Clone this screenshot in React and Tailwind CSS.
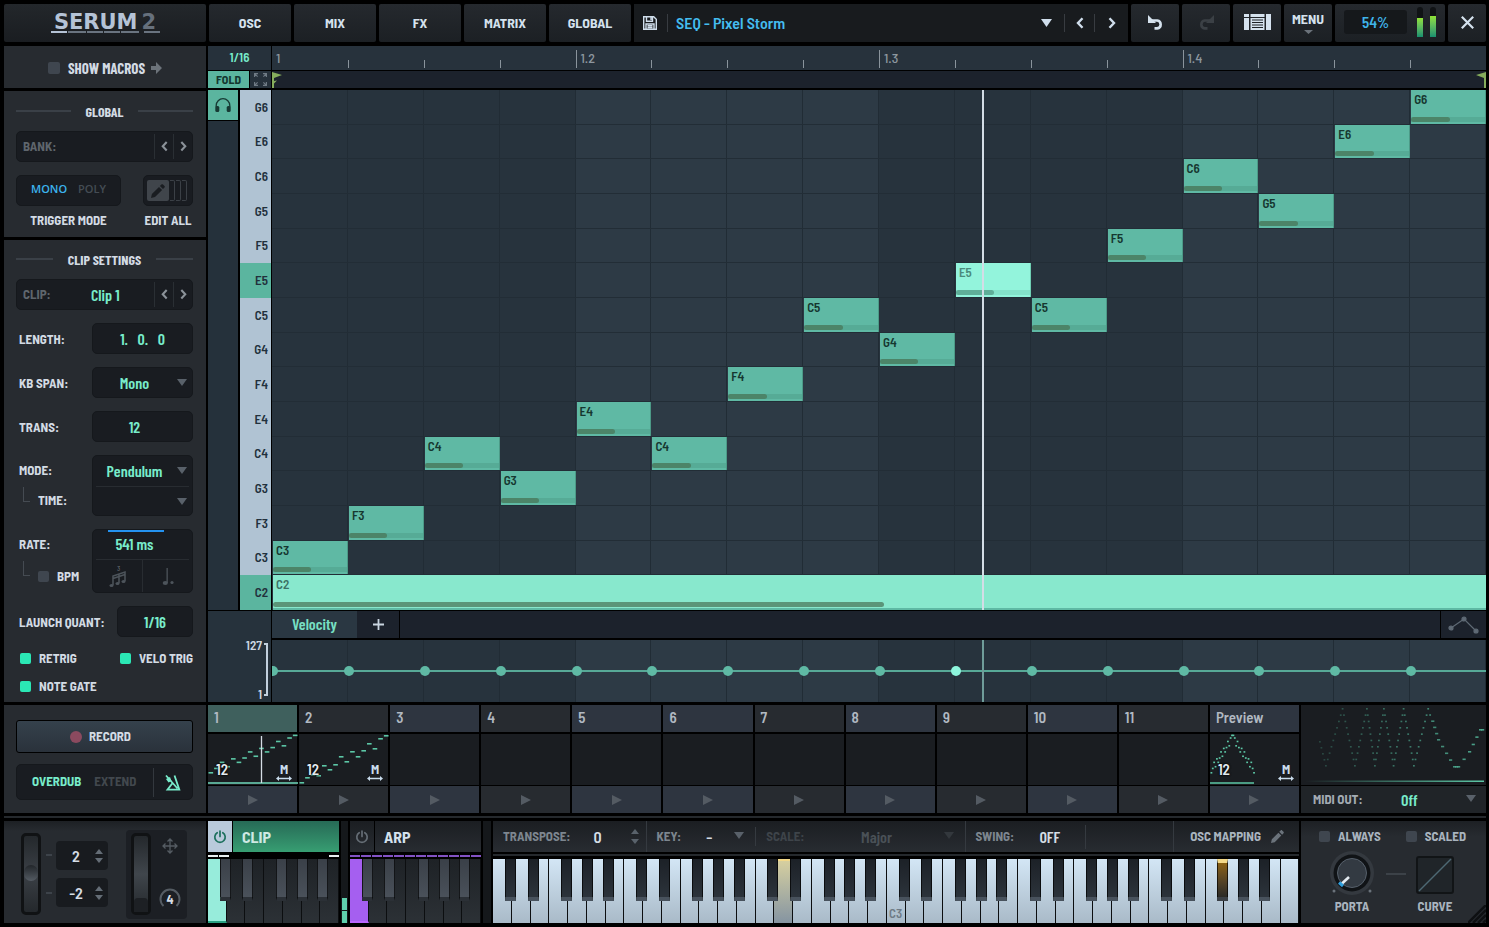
import React from "react";

const PANEL = "bg-[#272b30]";
const FIELD = "rounded-[5px] border border-[#15181c] bg-[#191c21]";
const LABEL = "text-[13px] leading-4 font-bold text-[#d3dbe4]";
const VALUE = "font-['Barlow_Condensed','Barlow_Semi_Condensed','Liberation_Sans_Narrow',Roboto,sans-serif] text-[16px] font-semibold";

const ROWS = ["G6", "E6", "C6", "G5", "F5", "E5", "C5", "G4", "F4", "E4", "C4", "G3", "F3", "C3", "C2"];
const NOTES = ["C3", "F3", "C4", "G3", "E4", "C4", "F4", "C5", "G4", "E5", "C5", "F5", "C6", "G5", "E6", "G6"];
const ACTIVE = 9;
const STEPS = Array.from({ length: 16 }, (_, i) => i);
const SEMI = { C: 0, D: 2, E: 4, F: 5, G: 7, A: 9, B: 11 };
const pitchY = (n) => 39 - (SEMI[n[0]] + (Number(n[1]) - 3) * 12) * 0.87;
const CLIP_ONE = NOTES.map(pitchY);
const CLIP_TWO = [49, 44, 41, 42, 32, 36, 31, 23, 28, 18, 23, 17, 10, 15, 5, 2];

function Caret({ className = "", up = false, w = 10, h = 7 }) {
  return (
    <svg className={className} width={w} height={h} viewBox="0 0 10 7" preserveAspectRatio="none" aria-hidden="true">
      <path d={up ? "M0 7h10L5 0z" : "M0 0h10L5 7z"} fill="currentColor" />
    </svg>
  );
}

function Chevron({ left = false, w = 8 }) {
  return (
    <svg width={w} height={w * 1.5} viewBox="0 0 8 12" fill="none" stroke="currentColor" strokeWidth="2.4" aria-hidden="true">
      <path d={left ? "M6.5 1.2 2 6l4.500 4.800" : "M1.500 1.200 6 6l-4.500 4.800"} />
    </svg>
  );
}

function Power({ className }) {
  return (
    <svg className={className} width="14" height="14" viewBox="0 0 14 14" fill="none" stroke="currentColor" strokeWidth="1.700" strokeLinecap="round" aria-hidden="true">
      <path d="M7 1v5.500M4.200 2.700a5.200 5.200 0 1 0 5.600 0" />
    </svg>
  );
}

function Pencil({ size = 14 }) {
  return (
    <svg width={size} height={size} viewBox="0 0 14 14" fill="currentColor" aria-hidden="true">
      <path d="M0 14l.9-4L8 2.900l3.100 3.100L4 13.100zM8.900 2l1.500-1.500c.5-.5 1.100-.5 1.600 0l1.500 1.500c.5.5.5 1.100 0 1.600L12 5.100z" />
    </svg>
  );
}

function Check({ id, label, on, labelClass = "text-[13px] text-[#d3dbe4]", box = "size-[11px]" }) {
  return (
    <label htmlFor={id} className={`flex items-center gap-2 leading-4 font-bold ${labelClass}`}>
      <input id={id} type="checkbox" defaultChecked={on} className={`${box} shrink-0 appearance-none rounded-[2px] bg-[#3f464f] checked:bg-[#2be8b5]`} />
      {label}
    </label>
  );
}

function SectionTitle({ children, line }) {
  return (
    <div className="flex h-5 items-center justify-between">
      <span className={`${line} h-[2px] bg-[#3a4047]`} />
      <h2 className="font-['Barlow_Condensed','Barlow_Semi_Condensed','Liberation_Sans_Narrow',Roboto,sans-serif] text-[14px] font-bold text-[#d3dbe4]">{children}</h2>
      <span className={`${line} h-[2px] bg-[#3a4047]`} />
    </div>
  );
}

function Stepper({ name, value, id, text = "" }) {
  return (
    <div className={`flex h-[31px] items-stretch ${FIELD}`}>
      <label htmlFor={id} className="self-center pl-[6px] text-[13px] font-bold text-[#5f666d]">{name}</label>
      <input id={id} defaultValue={value} className={`min-w-0 flex-1 bg-transparent pl-[6px] text-center outline-none ${VALUE} ${text}`} />
      <button aria-label={`Previous ${name}`} className="my-[2px] flex w-[19px] items-center justify-center border-l border-[#2a2f34] text-[#8b9299]"><Chevron left w={7} /></button>
      <button aria-label={`Next ${name}`} className="my-[2px] flex w-[19px] items-center justify-center border-l border-[#2a2f34] text-[#8b9299]"><Chevron w={7} /></button>
    </div>
  );
}

function Select({ id, value, className = "", caret = "text-[#59616a]", textClass = "text-[#78eccb]" }) {
  return (
    <div className={`relative flex ${className}`}>
      <select id={id} defaultValue={value} className={`h-full w-full appearance-none bg-transparent pr-4 text-center outline-none [text-align-last:center] ${VALUE} ${textClass}`}>
        <option>{value}</option>
      </select>
      <Caret className={`pointer-events-none absolute top-[11px] right-[5px] ${caret}`} />
    </div>
  );
}

function Header() {
  const tab = "flex h-[38px] items-center justify-center rounded-[2px] bg-linear-to-b from-[#25292e] to-[#1c2024] pb-[2px] text-[#d5e2ee]";
  return (
    <header className="flex shrink-0 gap-[3px] pt-1">
      <div className="flex h-[38px] w-[202px] flex-col items-center justify-center rounded-[2px] bg-linear-to-b from-[#23272b] to-[#1a1d21]">
        <h1 className="font-[DejaVu_Sans,sans-serif] text-[21px] leading-[18px] font-bold whitespace-nowrap text-[#b5c3d6]">
          SERUM<span className="pl-1 text-[#66707c]">2</span>
        </h1>
        <span className="flex gap-px">
          <i className="h-[2px] w-4 bg-[#b5c3d6]" />
          <i className="h-[2px] w-[18px] bg-[#6a7480]" />
          <i className="h-[2px] w-[16px] bg-[#6a7480]" />
          <i className="h-[2px] w-[16px] bg-[#6a7480]" />
          <i className="h-[2px] w-[18px] bg-[#6a7480]" />
          <i className="ml-1 h-[2px] w-4 bg-[#6a7480]" />
        </span>
      </div>
      <nav className="flex gap-[3px]">
        {["OSC", "MIX", "FX", "MATRIX", "GLOBAL"].map((t) => (
          <button key={t} className={`${tab} w-[82px] text-[14px] font-bold`}>{t}</button>
        ))}
      </nav>
      <div className="flex h-[38px] min-w-0 flex-1 items-center bg-[#181b1e] pl-[9px] text-[#d0deec]">
        <button aria-label="Save preset">
          <svg width="14" height="14" viewBox="0 0 14 14" fill="none" stroke="currentColor" strokeWidth="1.400">
            <path d="M.7.700h10l2.600 2.600v10H.7zM3.500.700v4.500h6V.700M8 1.500v2.500M3 13.300V8h8v5.300M4.500 9.700h5M4.500 11.500h5" />
          </svg>
        </button>
        <span className="mr-[8px] ml-[10px] h-[18px] w-px bg-[#383c41]" />
        <button className="flex min-w-0 flex-1 items-center justify-between pr-[12px] text-left text-[16px] font-semibold whitespace-nowrap text-[#44bdf0]">
          SEQ - Pixel Storm
          <Caret className="text-[#d0deec]" w={11} h={8} />
        </button>
        <button aria-label="Previous preset" className="flex h-[18px] w-[30px] items-center justify-center border-l border-[#383c41]"><Chevron left w={8} /></button>
        <button aria-label="Next preset" className="flex h-[18px] w-[34px] items-center justify-center border-l border-[#383c41]"><Chevron w={8} /></button>
      </div>
      <button aria-label="Undo" className={`${tab} w-12`}>
        <svg width="17" height="16" viewBox="0 0 17 16" fill="none" stroke="currentColor" strokeWidth="2.600">
          <path d="M3 6.500h7.300a4 4 0 0 1 0 7.900H7.500" />
          <path d="M1 1v8h8z" fill="currentColor" stroke="none" />
        </svg>
      </button>
      <button aria-label="Redo" className={`${tab} w-12`}>
        <svg width="17" height="16" viewBox="0 0 17 16" fill="none" stroke="#3b4045" strokeWidth="2.600">
          <path d="M14 6.500H6.700a4 4 0 0 0 0 7.900H9.500" />
          <path d="M16 1v8H8z" fill="#3b4045" stroke="none" />
        </svg>
      </button>
      <button aria-label="Browser" className={`${tab} w-12`}>
        <svg width="27" height="16" viewBox="0 0 27 16" fill="currentColor">
          <path d="M0 0h5v3H0zM0 4h5v12H0zM22 0h5v16h-5zM6.500 0h14v3h-14zM6.500 4h14v12h-14z" />
          <path d="M8 6h11M8 8.500h11M8 11h11M8 13.500h11" stroke="#1d2125" strokeWidth="1" />
        </svg>
      </button>
      <button className={`${tab} w-12 flex-col gap-[3px] text-[14px] leading-[16px] font-bold`}>
        MENU
        <Caret className="text-[#6b727a]" w={9} h={4} />
      </button>
      <div className={`${tab} w-[110px] gap-[10px]`}>
        <output className="flex h-6 w-[63px] items-center justify-center rounded-[3px] bg-[#15181b] text-[15px] font-semibold text-[#3fb4ea]">54%</output>
        <div className="flex h-[30px] items-end gap-[7px]" aria-label="Output level">
          <span className="flex h-full w-[6px] items-end rounded-t-[3px] bg-[#101315]"><i className="h-[19px] w-full bg-linear-to-b from-[#8fe234] to-[#16906e]" /></span>
          <span className="flex h-full w-[6px] items-end rounded-t-[3px] bg-[#101315]"><i className="h-[21px] w-full bg-linear-to-b from-[#8fe234] to-[#16906e]" /></span>
        </div>
      </div>
      <button aria-label="Close" className={`${tab} w-[38px]`}>
        <svg width="13" height="13" viewBox="0 0 13 13" stroke="currentColor" strokeWidth="2.200"><path d="M.8.800l11.400 11.400M12.200.800.8 12.200" /></svg>
      </button>
    </header>
  );
}

function Sidebar() {
  const row = "flex items-center justify-between pl-[3px]";
  return (
    <aside className="flex w-[202px] shrink-0 flex-col gap-[3px]">
      <section className={`flex h-[42px] items-center justify-center gap-[6px] pt-[2px] ${PANEL}`}>
        <Check id="macros" label="SHOW MACROS" box="size-3" labelClass="font-['Barlow_Condensed','Barlow_Semi_Condensed','Liberation_Sans_Narrow',Roboto,sans-serif] text-[15px] text-[#d3dbe4]" />
        <svg width="11" height="12" viewBox="0 0 11 12" fill="#6c737a"><path d="M0 4h5V0l6 6-6 6V8H0z" /></svg>
      </section>

      <section className={`h-[146px] pt-[10px] pr-[13px] pl-3 ${PANEL}`}>
        <SectionTitle line="w-[55px]">GLOBAL</SectionTitle>
        <div className="mt-[10px]"><Stepper id="bank" name="BANK:" value="" /></div>
        <div className="mt-[13px] flex justify-between">
          <div className="flex flex-col items-center gap-[6px]">
            <div className={`flex h-[31px] w-[105px] items-center justify-center gap-[11px] pb-[2px] font-[Open_Sans,sans-serif] text-[11px] font-semibold ${FIELD}`}>
              <button className="text-[#3cb4ee]">MONO</button>
              <button className="text-[#444c54]">POLY</button>
            </div>
            <span className={LABEL}>TRIGGER MODE</span>
          </div>
          <div className="flex flex-col items-center gap-[6px]">
            <button aria-label="Edit all clips" className={`flex h-[31px] w-[50px] items-center gap-px pl-[3px] ${FIELD}`}>
              <span className="flex h-[21px] w-[22px] items-center justify-center rounded-[2px] bg-[#40454b] text-[#1a1d21]"><Pencil /></span>
              <i className="h-[21px] w-[5px] rounded-r-[2px] border border-l-0 border-[#3b4046]" />
              <i className="h-[21px] w-[5px] rounded-r-[2px] border border-l-0 border-[#3b4046]" />
              <i className="h-[21px] w-[5px] rounded-r-[2px] border border-l-0 border-[#3b4046]" />
            </button>
            <span className={LABEL}>EDIT ALL</span>
          </div>
        </div>
      </section>

      <section className={`flex flex-1 flex-col gap-[13px] pt-[9px] pr-[13px] pb-2 pl-3 ${PANEL}`}>
        <div className="flex flex-col gap-[10px]">
          <SectionTitle line="w-[37px]">CLIP SETTINGS</SectionTitle>
          <Stepper id="clip" name="CLIP:" value="Clip 1" text="text-[#78eccb]" />
        </div>
        <div className={row}>
          <label htmlFor="length" className={LABEL}>LENGTH:</label>
          <input id="length" defaultValue="1.   0.   0" className={`h-[31px] w-[101px] text-center text-[#78eccb] ${VALUE} ${FIELD}`} />
        </div>
        <div className={row}>
          <label htmlFor="kbspan" className={LABEL}>KB SPAN:</label>
          <Select id="kbspan" value="Mono" className={`h-[31px] w-[101px] ${FIELD}`} />
        </div>
        <div className={row}>
          <label htmlFor="trans" className={LABEL}>TRANS:</label>
          <input id="trans" defaultValue="12" className={`h-[31px] w-[101px] pr-4 text-center text-[#78eccb] ${VALUE} ${FIELD}`} />
        </div>
        <div className="flex justify-between pl-[3px]">
          <div className="flex flex-col gap-[14px] pt-[7px]">
            <label htmlFor="mode" className={LABEL}>MODE:</label>
            <div className="flex gap-2 pl-1">
              <i className="-mt-[5px] h-[15px] w-[7px] border-b border-l border-[#454b52]" />
              <label htmlFor="time" className={LABEL}>TIME:</label>
            </div>
          </div>
          <div className={`flex h-[61px] w-[101px] flex-col ${FIELD}`}>
            <Select id="mode" value="Pendulum" className="h-[30px]" />
            <div className="mx-[3px] h-px bg-[#282c31]" />
            <Select id="time" value="" className="h-[28px]" />
          </div>
        </div>
        <div className="flex justify-between pl-[3px]">
          <div className="flex flex-col gap-4 pt-[7px]">
            <label htmlFor="rate" className={LABEL}>RATE:</label>
            <div className="flex gap-2 pl-1">
              <i className="-mt-[7px] h-[15px] w-[7px] border-b border-l border-[#454b52]" />
              <Check id="bpm" label="BPM" />
            </div>
          </div>
          <div className={`flex h-16 w-[101px] flex-col ${FIELD}`}>
            <div className="mr-7 ml-[15px] h-[2px] shrink-0 bg-[#2492f0]" />
            <input id="rate" defaultValue="541 ms" className={`h-[24px] w-full bg-transparent pr-4 text-center text-[#78eccb] ${VALUE}`} />
            <div className="mx-[3px] mt-[3px] h-px bg-[#282c31]" />
            <div className="flex flex-1 items-center">
              <button aria-label="Triplet" className="flex h-full flex-1 items-center justify-center border-r border-[#282c31]">
                <svg width="18" height="23" viewBox="0 0 18 23" fill="none" stroke="#4d545b" strokeWidth="1.500">
                  <path d="M4 20v-9l12-4v9M10 18V9M4 13.500l12-4" />
                  <ellipse cx="2.500" cy="20.500" rx="2" ry="1.500" fill="#4d545b" stroke="none" />
                  <ellipse cx="8.500" cy="18.500" rx="2" ry="1.500" fill="#4d545b" stroke="none" />
                  <ellipse cx="14.500" cy="16.500" rx="2" ry="1.500" fill="#4d545b" stroke="none" />
                  <text x="8" y="5.500" fontSize="7" fill="#6a7178" stroke="none">3</text>
                </svg>
              </button>
              <button aria-label="Dotted" className="flex h-full flex-1 items-center justify-center">
                <svg width="12" height="19" viewBox="0 0 12 19" fill="#4d545b"><path d="M4.500 1h1.300v15H4.500z" /><ellipse cx="3.300" cy="16" rx="2.600" ry="2" /><circle cx="10" cy="15.500" r="1.600" /></svg>
              </button>
            </div>
          </div>
        </div>
        <div className={row}>
          <label htmlFor="quant" className={LABEL}>LAUNCH QUANT:</label>
          <input id="quant" defaultValue="1/16" className={`h-[31px] w-[76px] text-center text-[#78eccb] ${VALUE} ${FIELD}`} />
        </div>
        <div className="flex flex-col gap-3 pl-1">
          <div className="flex justify-between"><Check id="retrig" label="RETRIG" on /><Check id="velotrig" label="VELO TRIG" on /></div>
          <Check id="notegate" label="NOTE GATE" on />
        </div>
      </section>
    </aside>
  );
}

function Roll() {
  return (
    <section className="flex min-w-0 flex-1 flex-col">
      <div className="flex h-[25px] border-b border-black">
        <div className="flex w-16 items-center justify-center border-r border-black bg-[#26313b] text-[13px] font-semibold text-[#78eccb]">1/16</div>
        <div className="grid flex-1 grid-cols-16 bg-[#27323c] text-[14px] leading-6 font-medium text-[#8d979f]">
          {STEPS.map((i) => (
            <div key={i} className="flex items-end">
              {i > 0 && <i className={`mb-[2px] w-px bg-[#8a949c] ${i % 4 ? "h-2" : "h-[18px]"}`} />}
              {i % 4 === 0 && <span className="pl-1">{i ? `1.${i / 4 + 1}` : "1"}</span>}
            </div>
          ))}
        </div>
      </div>
      <div className="flex h-[19px] border-b-2 border-black">
        <div className="flex w-16 border-r border-black bg-[#26313b]">
          <button className="flex w-[42px] items-center justify-center border-r border-black bg-[#5bb59f] pb-px text-[12px] leading-none font-bold text-[#14362f]">FOLD</button>
          <button aria-label="Fit view" className="flex flex-1 items-center justify-center">
            <svg width="13" height="13" viewBox="0 0 13 13" fill="none" stroke="#6f7a84" strokeWidth="1.200"><path d="M.6 4V.600H4M.6.600l3 3M9 .600h3.400V4M12.400.600l-3 3M.6 9v3.400H4M.6 12.400l3-3M12.400 9v3.400H9M12.400 12.400l-3-3" /></svg>
          </button>
        </div>
        <div className="flex flex-1 justify-between bg-[#1c222c]">
          <svg width="10" height="17" viewBox="0 0 10 17" fill="#86ad5c"><path d="M0 1l10 3-8 3v3l3-.5L2 12.500V17H0z" /></svg>
          <svg width="10" height="17" viewBox="0 0 10 17" fill="#86ad5c"><path d="M10 1 0 4l8 3v10h2z" /></svg>
        </div>
      </div>

      <div className="flex min-h-[480px] flex-1 border-b border-black">
        <div className="w-8 border-r-2 border-black bg-[#25313b]">
          <button aria-label="Audition notes" className="flex h-[31px] w-[30px] items-center justify-center border-b border-black bg-[#5bb59f]">
            <svg width="16" height="14" viewBox="0 0 16 14" fill="#173a34"><path d="M1.200 9V7.500a6.800 6.800 0 0 1 13.600 0V9" fill="none" stroke="#173a34" strokeWidth="1.300" /><rect x=".3" y="8" width="4" height="6" rx="1.500" /><rect x="11.700" y="8" width="4" height="6" rx="1.500" /></svg>
          </button>
        </div>
        <div className="grid w-8 grid-rows-15 border-r border-black bg-[#b0c3d3] text-[13px] font-semibold text-[#22303c]">
          {ROWS.map((r) => (
            <div key={r} className={`flex items-center justify-end pr-[3px] ${r === "E5" || r === "C2" ? "bg-[#5bb59f]" : ""}`}>{r}</div>
          ))}
        </div>
        <div className="relative grid flex-1 grid-cols-16 grid-rows-15 overflow-hidden bg-[#27333d]">
          {STEPS.map((i) => (
            <i key={`c${i}`} style={{ gridColumn: i + 1, gridRow: "1 / -1" }} className={`border-r border-[#212c35] ${Math.floor(i / 4) % 2 ? "bg-[#2d3a45]" : "bg-[#27333d]"}`} />
          ))}
          {ROWS.map((r, i) => (
            <i key={r} style={{ gridRow: i + 1, gridColumn: "1 / -1" }} className="border-b border-[#222d36]" />
          ))}
          {NOTES.map((n, i) => (
            <div key={i} style={{ gridColumn: i + 1, gridRow: ROWS.indexOf(n) + 1 }} className={`mb-px ml-px flex flex-col justify-between border-r ${i === ACTIVE ? "border-[#6fd0b4] bg-[#93f4dc] text-[#4b8b7c]" : "border-[#4c9a87] bg-[#5fb9a4] text-[#163730]"}`}>
              <span className="pl-[3px] text-[13px] leading-[19px] font-semibold">{n}</span>
              <span className={`mb-[2px] h-[5px] ${i === ACTIVE ? "bg-[#84e2ca]" : "bg-[#56ab96]"}`}><i className={`block h-full w-[52%] rounded-full ${i === ACTIVE ? "bg-[#5fae98]" : "bg-[#4c8468]"}`} /></span>
            </div>
          ))}
          <div style={{ gridColumn: "1 / -1", gridRow: 15 }} className="ml-px flex flex-col justify-between bg-[#88e8cd] text-[#3d7265]">
            <span className="pl-[3px] text-[13px] leading-[19px] font-semibold">C2</span>
            <span className="h-[8px] border-b-2 border-[#5fb9a4]"><i className="block h-[5px] w-[50.400%] rounded-full bg-[#5b9579]" /></span>
          </div>
          <i className="absolute inset-y-0 left-[58.500%] w-[2px] bg-[#d3dde6]" />
        </div>
      </div>

      <div className="flex h-[91px]">
        <div className="flex w-16 justify-end gap-[2px] border-r border-black bg-[#26323c] pt-[26px] pr-[3px] text-[13px] leading-4 font-semibold text-[#cdd8e3]">
          <div className="flex flex-col justify-between text-right"><span>127</span><span>1</span></div>
          <i className="my-[6px] w-1 border-y-2 border-r-2 border-[#c2d0de]" />
        </div>
        <div className="flex min-w-0 flex-1 flex-col">
          <div className="flex h-[29px] border-b-2 border-black bg-[#1c222c]">
            <button className={`w-[85px] bg-[#2a3742] pb-px text-[#78e0c4] ${VALUE}`}>Velocity</button>
            <button aria-label="Add lane" className="flex w-[43px] items-center justify-center border-r border-black">
              <svg width="11" height="11" viewBox="0 0 11 11" stroke="#c9d5e0" strokeWidth="1.800"><path d="M0 5.500h11M5.500 0v11" /></svg>
            </button>
            <button aria-label="Line tool" className="ml-auto flex w-[46px] items-center justify-center border-l border-black">
              <svg width="31" height="18" viewBox="0 0 31 18" fill="#5f6a75" stroke="#5f6a75" strokeWidth="1.200"><path d="M3 12 16 3l12 12" fill="none" /><circle cx="3" cy="12" r="2" /><circle cx="16" cy="3" r="2" /><circle cx="28" cy="15" r="2" /></svg>
            </button>
          </div>
          <div className="relative grid flex-1 grid-cols-16 overflow-hidden">
            {STEPS.map((i) => (
              <div key={i} className={`border-r border-[#212c35] ${Math.floor(i / 4) % 2 ? "bg-[#2d3a45]" : "bg-[#27333d]"}`} />
            ))}
            <i className="absolute inset-x-0 top-[30px] h-[2px] bg-[#57a997]" />
            <i className="absolute inset-y-0 left-[58.500%] w-[2px] bg-[#6f9c99]" />
            <div className="absolute inset-0 grid grid-cols-16 items-center">
              {STEPS.map((i) => (
                <i key={i} className={`-ml-1 size-[10px] rounded-full ${i === ACTIVE ? "bg-[#8df5dc]" : "bg-[#5fb9a4]"}`} />
              ))}
            </div>
          </div>
        </div>
      </div>
    </section>
  );
}

function Dashes({ ys, width }) {
  const step = width / ys.length;
  return ys.map((y, i) => <rect key={i} x={i * step + 0.5} y={y - 1} width={Math.max(step - 1, 1.8)} height="1.600" fill="#5cc7a6" />);
}

function Clips() {
  const names = ["1", "2", "3", "4", "5", "6", "7", "8", "9", "10", "11", "Preview"];
  const dark = [1, 3, 6, 8, 10];
  return (
    <div className="grid min-w-0 flex-1 grid-cols-12 gap-x-[2px]">
      {names.map((n, i) => {
        const tone = dark.includes(i) ? "bg-[#272b30]" : "bg-[#2e3540]";
        const used = i < 2 || i === 11;
        return (
          <article key={n} className="flex flex-col">
            <h3 className={`h-[27px] pl-[6px] text-[15px] leading-[25px] font-semibold text-[#b1b9c2] ${i === 0 ? "bg-[#3f605d]" : tone}`}>{n}</h3>
            <div className="relative my-px h-[52px] border-t border-black bg-[#1a1d21]">
              {used && (
                <>
                  <svg className="absolute inset-0" width="90" height="51" viewBox="0 0 90 51">
                    {i === 0 && <><Dashes ys={CLIP_ONE} width={90} /><path d="M0 49h90" stroke="#6fd9bb" strokeWidth="1.300" /><path d="M53.500 2v47" stroke="#d5dde5" strokeWidth="1.300" /></>}
                    {i === 1 && <Dashes ys={CLIP_TWO} width={90} />}
                    {i === 11 && <><Dashes ys={[...CLIP_ONE, ...CLIP_ONE.slice().reverse()]} width={44} /><path d="M0 49h44" stroke="#5cc7a6" strokeWidth="1.300" /></>}
                  </svg>
                  <span className="absolute bottom-[8px] left-[8px] text-[15px] leading-4 font-semibold text-[#e4ebf1] [text-shadow:0_0_2px_#000,0_0_2px_#000]">12</span>
                  <span className="absolute right-[5px] bottom-[4px] flex flex-col items-center text-[13px] leading-[14px] font-bold text-[#c9dcec]">
                    M
                    <svg width="16" height="5" viewBox="0 0 16 5" fill="currentColor"><path d="M0 2.500 3 0v1.800h10V0l3 2.500L13 5V3.200H3V5z" /></svg>
                  </span>
                </>
              )}
            </div>
            <button aria-label={`Play ${n}`} className={`flex h-[27px] items-center justify-center ${tone}`}>
              <svg width="10" height="10" viewBox="0 0 10 10" fill="#545b63"><path d="M0 0l10 5-10 5z" /></svg>
            </button>
          </article>
        );
      })}
    </div>
  );
}

const TRACE = [[18, 36], [24, 60], [40.7, 3], [53, 60], [65, 3], [73, 60], [82, 3], [91.7, 60], [101.7, 3], [112, 60], [126.3, 3], [136, 34], [152, 61], [156, 61], [167, 46], [178, 24], [182, 24]];

function MidiOut() {
  const dots = [];
  TRACE.slice(0, -1).forEach(([x0, y0], s) => {
    const [x1, y1] = TRACE[s + 1];
    const n = Math.max(2, Math.round(Math.abs(y1 - y0) / 6.5));
    for (let k = 0; k < n; k++) dots.push([x0 + ((x1 - x0) * k) / n, y0 + ((y1 - y0) * k) / n]);
  });
  return (
    <section className="flex w-[185px] shrink-0 flex-col bg-[#1a1d21]">
      <svg className="w-full" height="80" viewBox="0 0 185 80" preserveAspectRatio="none">
        <defs><linearGradient id="fade"><stop offset="0" stopColor="#5cc7a6" stopOpacity="0" /><stop offset="1" stopColor="#5cc7a6" /></linearGradient></defs>
        {dots.map(([x, y], i) => <rect key={i} x={x} y={y} width={x > 130 ? 3.2 : 1.8} height="1.600" fill="#4fae93" opacity={0.2 + (x / 185) * 0.75} />)}
        <rect x="4" y="75.500" width="179" height="1.500" fill="url(#fade)" />
      </svg>
      <div className="flex h-7 items-center border-t border-black bg-[#202428] pl-3">
        <label htmlFor="midiout" className="text-[13px] font-bold whitespace-nowrap text-[#a3abb3]">MIDI OUT:</label>
        <Select id="midiout" value="Off" className="h-full flex-1 [&>select]:pr-[30px] [&>svg]:top-[9px] [&>svg]:right-[10px]" />
      </div>
    </section>
  );
}

function Record() {
  return (
    <section className={`flex w-[202px] shrink-0 flex-col gap-[11px] pt-[15px] pr-[13px] pl-3 ${PANEL}`}>
      <button className="flex h-[33px] items-center justify-center gap-[7px] rounded-[3px] border border-black bg-linear-to-b from-[#35414c] to-[#2a323b] pr-2 text-[13px] font-bold text-[#d3dbe4]">
        <i className="size-3 rounded-full bg-[#8b4a5f]" />RECORD
      </button>
      <div className={`flex h-9 items-center text-[13px] font-bold ${FIELD}`}>
        <button className="pl-[15px] text-[#78eccb]">OVERDUB</button>
        <button className="pl-[13px] text-[#42484e]">EXTEND</button>
        <button aria-label="Metronome" className="ml-auto flex h-[29px] w-[39px] items-center justify-center border-l border-[#33383e] text-[#78eccb]">
          <svg width="16" height="17" viewBox="0 0 16 17" fill="none" stroke="currentColor" strokeWidth="1.800"><path d="M8 8.500 2.500 15.600h11.800L9.500 1.500M1 1.500l11.500 13" /><path d="M1 5l4-2 1.500 4-3 1.500z" fill="currentColor" stroke="none" /></svg>
        </button>
      </div>
    </section>
  );
}

const BLACK_AFTER = [0, 1, 3, 4, 5];

function Keyboard({ count, dark, lit, litBlack, label, name }) {
  const white = dark ? "bg-linear-to-b from-[#1e2226] to-[#2c3136]" : "bg-linear-to-b from-[#d3e6f5] to-[#a9bac8]";
  const black = dark ? "bg-linear-to-b from-[#3a4048] to-[#4a515a] border-b-4 border-[#2b3036]" : "bg-linear-to-b from-[#1c2127] to-[#2c333b] border-b-4 border-[#48525d]";
  return (
    <div className="flex h-16" role="group" aria-label={name}>
      {Array.from({ length: count }, (_, i) => (
        <div key={i} className="relative flex-1">
          <button aria-label={`Key ${i + 1}`} className={`flex h-full w-full items-end justify-center overflow-hidden border-r border-[#0c0e10] ${(lit && lit[i]) || white}`}>
            {label && label[i] && <span className="pb-1 text-[13px] leading-3 font-semibold text-[#6f7b86]">{label[i]}</span>}
          </button>
          {BLACK_AFTER.includes(i % 7) && i < count - 1 && (
            <button aria-label={`Sharp ${i + 1}`} className={`absolute top-0 z-10 h-[42px] w-[11px] border-x border-x-black/70 ${i % 7 === 0 || i % 7 === 3 ? "-right-[4px]" : i % 7 === 4 ? "-right-[6px]" : "-right-[8px]"} ${(litBlack && litBlack[i]) || black}`} />
          )}
        </div>
      ))}
    </div>
  );
}

function Wheels() {
  const wheel = "h-[82px] w-5 rounded-[5px] border-[3px] border-[#101214] bg-linear-to-b";
  const box = (v, n) => (
    <div className="flex h-[29px] w-[52px] items-center rounded-[4px] bg-[#181b1f]">
      <input aria-label={n} defaultValue={v} className="w-[40px] bg-transparent text-center text-[16px] font-semibold text-[#d5dde5]" />
      <span className="-ml-[1px] flex flex-col gap-1 text-[#646d76]"><Caret up w={8} h={5} /><Caret w={8} h={5} /></span>
    </div>
  );
  return (
    <section className="flex w-[202px] shrink-0 items-center bg-linear-to-b from-[#1d2024] from-0% via-[#272b30] via-10% to-[#272b30] pt-1 pl-[17px]">
      <div className={`${wheel} flex flex-col from-[#24282c] via-[#3b4046] to-[#24282c] pt-[29px]`}><i className="h-4 rounded-full bg-linear-to-b from-[#22262a] to-[#555c64]" /></div>
      <div className="flex h-10 w-[15px] flex-col items-center justify-between"><i className="h-[2px] w-[6px] bg-[#3d434a]" /><i className="h-[2px] w-[6px] bg-[#3d434a]" /></div>
      <div className="flex flex-col gap-2">{box("2", "Bend up")}{box("-2", "Bend down")}</div>
      <div className="ml-[18px] flex h-[89px] w-[61px] items-center gap-[8px] rounded-[4px] bg-[#1c1f24] pl-[5px]">
        <div className={`${wheel} flex items-end from-[#24282c] via-[#40464c] to-[#24282c]`}><i className="h-[14px] w-full rounded-t-[4px] bg-[#1d2024]" /></div>
        <div className="flex h-[72px] flex-col items-center justify-between">
          <svg width="16" height="16" viewBox="0 0 16 16" fill="none" stroke="#555c63" strokeWidth="1.300"><path d="M8 1v14M1 8h14M5.500 3.500 8 1l2.500 2.500M5.500 12.500 8 15l2.500-2.500M3.500 5.500 1 8l2.500 2.500M12.500 5.500 15 8l-2.500 2.500" /></svg>
          <span className="relative flex size-[22px] items-center justify-center text-[13px] leading-4 font-bold text-[#d5dde5]">
            <svg className="absolute inset-0" width="22" height="22" viewBox="0 0 22 22" fill="none" stroke="#555c63" strokeWidth="2"><path d="M4.500 18a9.500 9.500 0 1 1 13 0" /></svg>
            4
          </span>
        </div>
      </div>
    </section>
  );
}

function Bottom() {
  const cap = "text-[13px] font-bold whitespace-nowrap";
  return (
    <footer className="flex h-[102px] shrink-0 gap-[2px]">
      <Wheels />
      <section className="w-[131px] shrink-0">
        <div className="flex h-[31px]">
          <button aria-label="Clip power" className="flex w-[25px] items-center justify-center border-r border-black bg-[#b9cadb] text-[#1c705c]"><Power /></button>
          <h2 className="flex-1 bg-linear-to-b from-[#276a56] to-[#379e72] pl-[9px] text-[16px] leading-[31px] font-bold text-[#cfe9e3]">CLIP</h2>
        </div>
        <div className="grid h-[7px] grid-cols-12 items-center gap-px">
          {Array.from({ length: 12 }, (_, i) => <i key={i} className={`h-[2px] ${i < 2 || i === 11 ? "bg-[#e9eef0]" : ""}`} />)}
        </div>
        <Keyboard name="Clip keys" count={7} dark lit={{ 0: "bg-[#97ecdb] border-b-2 border-b-[#2aa182]" }} />
      </section>
      <div className="flex w-[7px] shrink-0 flex-col justify-end gap-px bg-[#15181b] px-px"><i className="h-3 bg-[#5fd0ad]" /><i className="h-3 bg-[#5fd0ad]" /></div>
      <section className="w-[131px] shrink-0">
        <div className="flex h-[31px] bg-linear-to-b from-[#1b1e22] to-[#282c31]">
          <button aria-label="Arp power" className="flex w-[25px] items-center justify-center border-r border-black text-[#656d75]"><Power /></button>
          <h2 className="flex-1 pl-[9px] text-[16px] leading-[31px] font-bold text-[#d5e2ee]">ARP</h2>
        </div>
        <div className="grid h-[7px] grid-cols-12 items-center gap-px">
          {Array.from({ length: 12 }, (_, i) => <i key={i} className="h-[2px] bg-[#8252c4]" />)}
        </div>
        <Keyboard name="Arp keys" count={7} dark lit={{ 0: "bg-[#a55ff0] border-b-2 border-b-[#bb66ff]" }} />
      </section>
      <div className="w-[8px] shrink-0 bg-[#15181b]" />
      <section className="min-w-0 flex-1">
        <div className="flex h-[31px] items-center bg-linear-to-b from-[#1b1e22] to-[#282c31] pl-[10px]">
          <label htmlFor="transpose" className={`${cap} text-[#7d868f]`}>TRANSPOSE:</label>
          <input id="transpose" defaultValue="0" className="w-[54px] bg-transparent text-center text-[16px] font-semibold text-[#d5dde5]" />
          <span className="flex h-full w-[22px] flex-col items-end justify-center gap-[5px] border-r border-[#353a40] pr-[7px] text-[#59626b]"><Caret up w={8} h={5} /><Caret w={8} h={5} /></span>
          <label htmlFor="key" className={`${cap} pl-[10px] text-[#7d868f]`}>KEY:</label>
          <Select id="key" value="–" textClass="text-[#d5dde5]" className="h-[31px] w-[74px] [&>select]:pr-[18px] [&>svg]:right-[11px]" />
          <label htmlFor="scale" className={`${cap} border-l border-[#353a40] pl-[10px] text-[#3e444a]`}>SCALE:</label>
          <Select id="scale" value="Major" textClass="text-[#4a5157]" caret="text-[#33383d]" className="h-[31px] w-[160px] [&>svg]:right-[11px]" />
          <label htmlFor="swing" className={`${cap} border-l border-[#353a40] pl-[10px] leading-[31px] text-[#7d868f]`}>SWING:</label>
          <input id="swing" defaultValue="OFF" className={`w-[72px] border-r border-[#353a40] bg-transparent text-center text-[#d5dde5] ${VALUE}`} />
          <button className="ml-auto flex h-full items-center gap-[10px] border-l border-[#353a40] pr-[15px] pl-4 text-[13px] font-bold whitespace-nowrap text-[#a9b4bf]">
            OSC MAPPING
            <span className="text-[#6b737b]"><Pencil size={13} /></span>
          </button>
        </div>
        <div className="mt-[2px] mb-[3px] h-[2px] bg-[#25292d]" />
        <Keyboard
          name="Keyboard"
          count={43}
          label={{ 21: "C3" }}
          lit={{ 15: "bg-linear-to-b from-[#d6cf9f] to-[#8594a1] border-t-2 border-t-[#f3d98a]" }}
          litBlack={{ 38: "bg-linear-to-b from-[#8a6112] to-[#2b2a26] border-t-4 border-t-[#f3d98a] border-b-4 border-b-[#3b4046]" }}
        />
      </section>
      <section className="relative flex w-[185px] shrink-0 flex-col overflow-hidden bg-linear-to-b from-[#1d2024] from-0% via-[#272b30] via-15% to-[#272b30] pt-[7px]">
        <div className="flex justify-between pr-[20px] pl-[18px]">
          <Check id="always" label="ALWAYS" labelClass="text-[13px] text-[#a9b4bf]" />
          <Check id="scaled" label="SCALED" labelClass="text-[13px] text-[#a9b4bf]" />
        </div>
        <div className="flex justify-between pt-[6px] pr-[32px] pl-[28px] text-[13px] leading-4 font-bold text-[#a9b4bf]">
          <div className="flex flex-col items-center">
            <svg width="46" height="46" viewBox="0 0 46 46" role="img" aria-label="Portamento time">
              <circle cx="23" cy="23" r="22" fill="#34393f" />
              <circle cx="23" cy="23" r="18.500" fill="#101316" />
              <circle cx="23" cy="23" r="14.500" fill="#333a42" stroke="#56606b" strokeWidth="1" />
              <path d="M20 27l-7 6.500" stroke="#e4ebf1" strokeWidth="2.600" />
              <path d="M10 32.500l4 3.500" stroke="#2f9fdd" strokeWidth="3" />
              <circle cx="5" cy="41" r="1.500" fill="#6a727a" /><circle cx="41" cy="41" r="1.500" fill="#6a727a" />
            </svg>
            <span className="pt-[2px]">PORTA</span>
          </div>
          <i className="mt-[23px] h-[2px] w-5 bg-[#3c4248]" />
          <div className="flex flex-col items-center pt-[6px]">
            <svg width="38" height="38" viewBox="0 0 38 38" role="img" aria-label="Portamento curve"><rect x="1" y="1" width="36" height="36" rx="2" fill="#202529" stroke="#111416" strokeWidth="2" /><path d="M3 35 35 3" stroke="#4d6873" strokeWidth="1.500" /></svg>
            <span className="pt-1">CURVE</span>
          </div>
        </div>
        <svg className="absolute right-0 bottom-0" width="18" height="18" viewBox="0 0 18 18" stroke="#0e1012" strokeWidth="2.500"><path d="M0 18 18 0M5 18 18 5M10 18l8-8M15 18l3-3" /></svg>
      </section>
    </footer>
  );
}

export default function App() {
  return (
    <main className="flex min-h-screen flex-col bg-black pr-[3px] pb-1 pl-1 font-['Barlow_Semi_Condensed','Roboto_Condensed','Liberation_Sans_Narrow',Roboto,sans-serif]">
      <Header />
      <div className="mt-1 flex flex-1 gap-[2px]">
        <Sidebar />
        <Roll />
      </div>
      <div className="mt-[3px] flex h-[108px] shrink-0 gap-[2px]">
        <Record />
        <Clips />
        <MidiOut />
      </div>
      <div className="my-[3px] h-[2px] shrink-0 bg-[#25292d]" />
      <Bottom />
    </main>
  );
}
